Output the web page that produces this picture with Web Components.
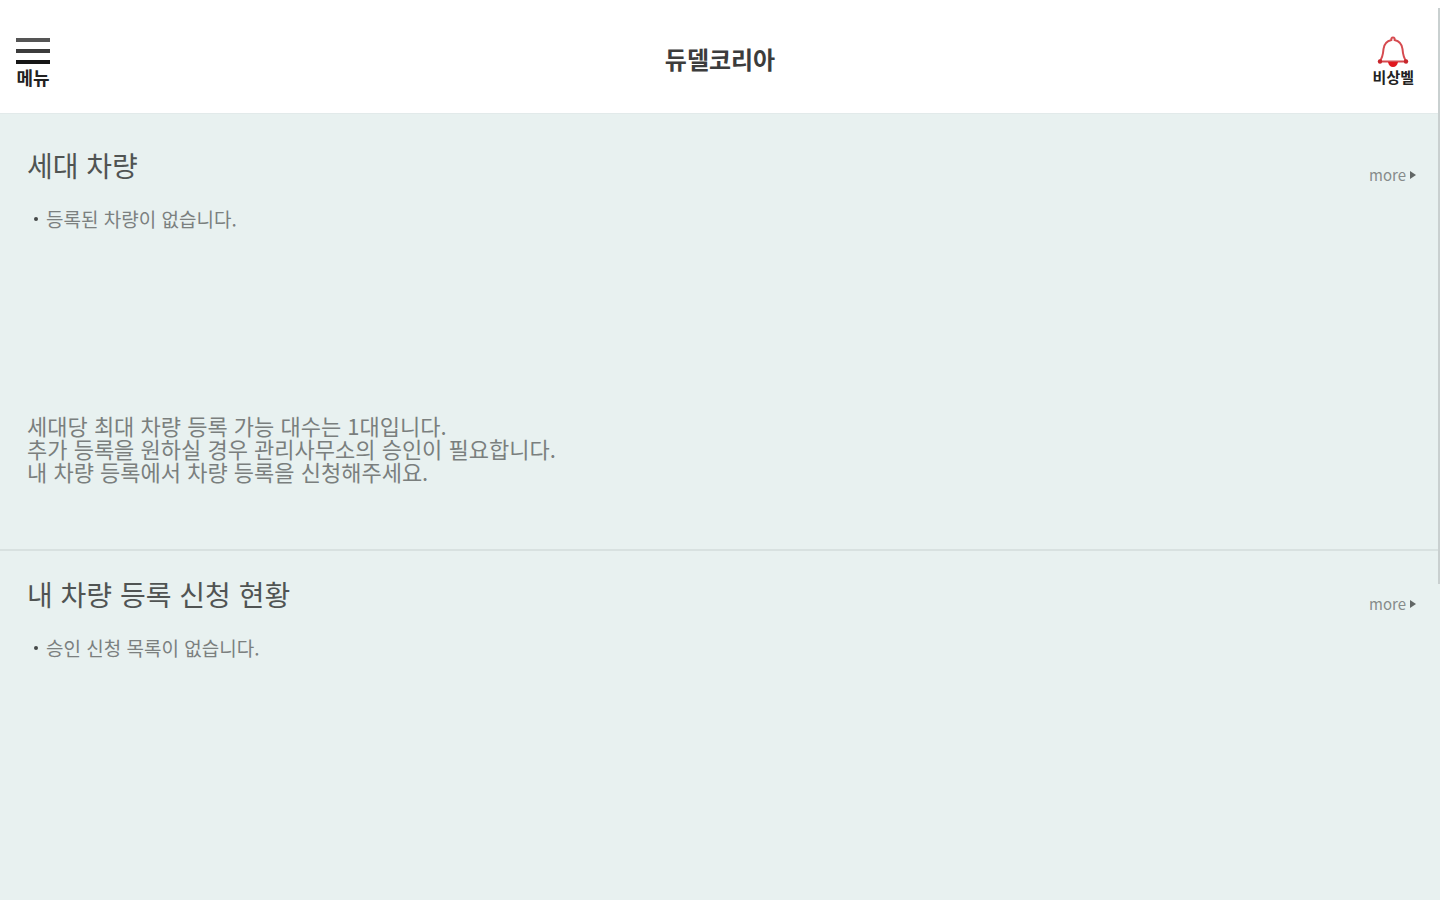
<!DOCTYPE html>
<html lang="ko">
<head>
<meta charset="utf-8">
<meta name="viewport" content="width=device-width, initial-scale=1">
<title>듀델코리아</title>
<style>
  html, body { margin: 0; min-height: 100%; background: #e8f1f0; }
  body { font-family: "Noto Sans CJK KR", sans-serif; color: #444; }
</style>
</head>
<body>
<vehicle-page></vehicle-page>
<script>
const define = (name, html) => {
  const template = document.createElement('template');
  template.innerHTML = html;
  customElements.define(name, class extends HTMLElement {
    constructor() {
      super();
      this.attachShadow({ mode: 'open' }).append(template.content.cloneNode(true));
    }
  });
};

define('icon-button', `
  <style>
    :host { display: block; }
    button { display: flex; flex-direction: column; align-items: center; margin: 0; padding: 0; border: 0;
      background: none; font: inherit; color: #222; cursor: pointer; white-space: nowrap; }
  </style>
  <button type="button"><slot name="icon"></slot><slot></slot></button>`);

define('app-header', `
  <style>
    :host { display: grid; grid-template-columns: 1fr auto 1fr; align-items: center; box-sizing: border-box;
      height: 114px; padding: 0 16px; background: #fff; border-bottom: 1px solid #e2eaea; }
    h1 { margin: 0; padding-top: 4px; font-size: 24px; line-height: 32px; font-weight: 700; color: #3c3c3c; }
    svg { display: block; }
    icon-button { font-size: 15px; line-height: 18px; font-weight: 700; padding-top: 8px; }
    .menu { justify-self: start; font-size: 18px; }
    .bell { justify-self: end; padding-right: 10px; }
  </style>
  <icon-button class="menu">
    <svg slot="icon" width="34" height="32" viewBox="0 0 34 32" aria-hidden="true">
      <path d="M0 4h34" stroke="#555" stroke-width="4"/>
      <path d="M0 15h34" stroke="#3c3c3c" stroke-width="4"/>
      <path d="M0 26h34" stroke="#161616" stroke-width="4"/>
    </svg>메뉴</icon-button>
  <h1>듀델코리아</h1>
  <icon-button class="bell">
    <svg slot="icon" width="34" height="32" viewBox="0 0 34 32" aria-hidden="true">
      <path d="M15.500 4a1.700 1.700 0 1 1 3 0C23 5 26 8.500 26.500 13c.4 5.500 1 9 4 12.500h-27C6.500 22 7.100 18.500 7.500 13 8 8.500 11 5 15.500 4Z" fill="#fff" stroke="#d64a4f" stroke-width="2" stroke-linejoin="round"/>
      <circle cx="4" cy="25.500" r="2.200" fill="#c7262c"/><circle cx="30" cy="25.500" r="2.200" fill="#c7262c"/>
      <path d="M12 26h10c-.6 3.500-2.500 5-5 5s-4.400-1.500-5-5Z" fill="#e0181f"/>
    </svg>비상벨</icon-button>`);

define('more-link', `
  <style>
    :host { display: block; }
    a { display: flex; align-items: center; gap: 4px; color: #868b8a; font-size: 15px; line-height: 20px; text-decoration: none; }
    svg { display: block; }
  </style>
  <a href="#"><span>more</span><svg width="6" height="8" viewBox="0 0 6 8" aria-hidden="true"><path d="M0 0 6 4 0 8Z" fill="#626766"/></svg></a>`);

define('info-section', `
  <style>
    :host { display: block; box-sizing: border-box; padding: 31px 24px 64px 27px; }
    header { display: flex; justify-content: space-between; align-items: flex-end; }
    h2 { margin: 0; font-size: 28px; line-height: 40px; font-weight: 400; color: #505453; }
  </style>
  <section>
    <header><h2><slot name="title"></slot></h2><more-link></more-link></header>
    <slot></slot>
  </section>`);

define('bullet-list', `
  <style>
    :host { display: block; box-sizing: border-box; min-height: 173px; padding-top: 20px; }
    ul { margin: 0; padding: 0 0 0 7px; list-style: none; }
    li { display: flex; align-items: center; gap: 8px; font-size: 19px; line-height: 28px; color: #7b807f; }
    li::before { content: ""; width: 4px; height: 4px; border-radius: 50%; background: #454948; }
  </style>
  <ul><li><slot></slot></li></ul>`);

define('notice-text', `
  <style>
    :host { display: block; padding-top: 56px; }
    p { margin: 0; font-size: 22px; line-height: 23px; color: #7a7f7e; }
  </style>
  <p><slot></slot></p>`);

define('scroll-thumb', `
  <style>
    :host { position: absolute; top: 8px; right: 0; width: 2px; height: 64vh; background: #c9d0d0; }
  </style>`);

define('vehicle-page', `
  <style>
    :host { display: block; position: relative; min-height: 100vh; }
    info-section + info-section { border-top: 2px solid #d8e1e0; padding-top: 23px; }
    .household { min-height: 435px; }
  </style>
  <app-header></app-header>
  <main>
    <info-section class="household">
      <span slot="title">세대 차량</span>
      <bullet-list>등록된 차량이 없습니다.</bullet-list>
      <notice-text>세대당 최대 차량 등록 가능 대수는 1대입니다.<br>추가 등록을 원하실 경우 관리사무소의 승인이 필요합니다.<br>내 차량 등록에서 차량 등록을 신청해주세요.</notice-text>
    </info-section>
    <info-section>
      <span slot="title">내 차량 등록 신청 현황</span>
      <bullet-list>승인 신청 목록이 없습니다.</bullet-list>
    </info-section>
  </main>
  <scroll-thumb></scroll-thumb>`);
</script>
</body>
</html>
